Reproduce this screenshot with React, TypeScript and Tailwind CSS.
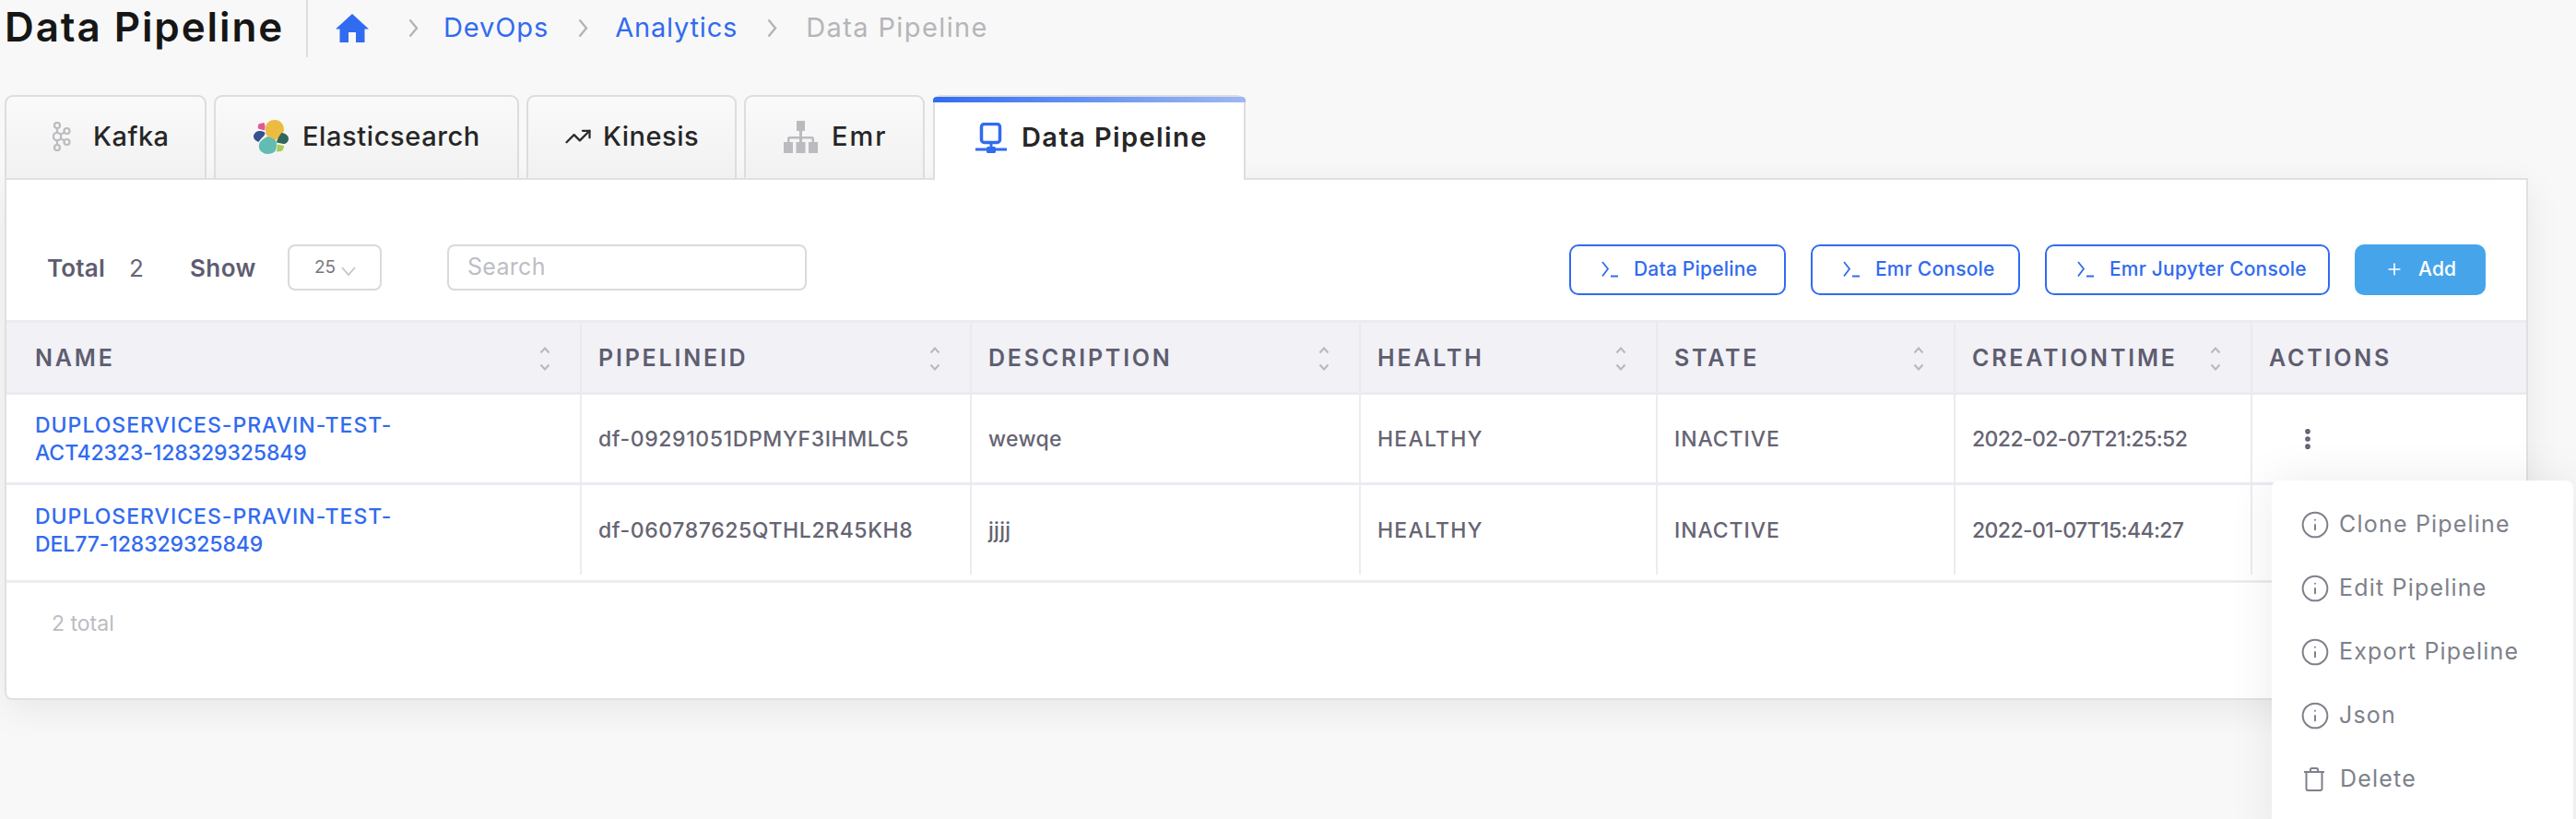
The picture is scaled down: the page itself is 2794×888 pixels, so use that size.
import { EllipsisVertical, Info, Plus, TrendingUp } from "lucide-react";

const HomeIcon = () => (
  <svg width="36" height="31" viewBox="0 0 36 31" fill="#316bf0">
    <path d="M18 0L36 16.500H31.500V31H22V20H14V31H4.500V16.500H0z" />
  </svg>
);

const KafkaIcon = () => (
  <svg width="20" height="32" viewBox="0 0 20 32" fill="none" stroke="#bcbcc0" strokeWidth="2.200">
    <circle cx="5" cy="4" r="3" />
    <circle cx="5" cy="16" r="4.200" />
    <circle cx="5" cy="28" r="3" />
    <circle cx="15.500" cy="10" r="3" />
    <circle cx="15.500" cy="22" r="3" />
    <path d="M5 7v5M5 20v5M8.500 14l4.500-2.500M8.500 18l4.500 2.500" />
  </svg>
);

const ElasticIcon = () => (
  <svg width="38" height="37" viewBox="0 0 38 37">
    <path d="M13 9c0-5 4-9 10-9 6 0 10 5 10 10 0 3-2 6-4 8l-6 4.500c-2-2-7-4-9-6-1-2-1-5-1-7.500z" fill="#ecbb42" />
    <path d="M5.500 4.500L11 3c1.500 1 2 5 1 8.500L5 9.500c-.5-2 0-4 .5-5z" fill="#e05a92" />
    <path d="M4 12.500c3-1 6-.5 8.500 1.500 0 2-1.500 4-3.500 5.500-1 1-2.500 3-3.500 4.500C3 23 0 21 0 18c0-2 2-5 4-5.500z" fill="#35518f" />
    <path d="M30.500 14c4 .5 7.500 3 7.500 6.500 0 3-3 6-5.500 5.500L25 24.500c0-2 3-8 5.500-10.500z" fill="#30665b" />
    <path d="M7 24c3-3 7-6 9-6 3 1 7 3 8.500 5 1 4 .5 8-1 11-2 2-5 3-9 3-4-.5-8-3-8.500-7-.5-2 0-4 1-6z" fill="#62bcb2" />
    <path d="M25.500 26.500l7.500 1.500c0 2-1 5-3 6l-5 .5c.5-2.500.5-5.500.5-8z" fill="#a8cc55" />
  </svg>
);

const EmrIcon = () => (
  <svg width="37" height="35" viewBox="0 0 37 35" fill="#bbbbbf">
    <rect x="14" y="0" width="9" height="11" />
    <rect x="17" y="11" width="3" height="6" />
    <path d="M4 24v-5c0-1 1-2 2-2h25c1 0 2 1 2 2v5h-2.500v-4.500h-10.500v4.500h-3v-4.500h-10.500v4.500z" />
    <rect x="0" y="23" width="10" height="12" />
    <rect x="13.500" y="23" width="10" height="12" />
    <rect x="27" y="23" width="10" height="12" />
  </svg>
);

const PipelineIcon = () => (
  <svg width="34" height="33" viewBox="0 0 34 33" fill="none" stroke="#316bf0">
    <rect x="6.500" y="1.500" width="20" height="20" rx="3" strokeWidth="3.500" />
    <path d="M17 23v5M0 29h34" strokeWidth="3" />
    <rect x="12" y="26" width="10" height="7" rx="1.500" fill="#316bf0" stroke="none" />
  </svg>
);

const TermIcon = () => (
  <svg width="20" height="18" viewBox="0 0 20 18" fill="none" stroke="#316bf0" strokeWidth="1.800">
    <path d="M2 1l6 7.500-6 8M11 16.500h8" />
  </svg>
);

const SortIcon = () => (
  <svg width="12" height="26" viewBox="0 0 12 26" fill="none" stroke="#b7b7c3" strokeWidth="2">
    <path d="M1.500 6.500L6 1.500l4.500 5M1.500 19.500l4.500 5 4.500-5" />
  </svg>
);

const TrashIcon = () => (
  <svg width="24" height="26" viewBox="0 0 24 26" fill="none" stroke="#7d818b" strokeWidth="2">
    <path d="M1 5h22M8 5V2.500C8 1.500 8.500 1 9.500 1h5c1 0 1.500.5 1.500 1.500V5M3.500 5v18c0 1 1 2 2 2h13c1 0 2-1 2-2V5" />
  </svg>
);

const Crumb = () => (
  <svg width="11" height="21" viewBox="0 0 11 21" fill="none" stroke="#b4b4b8" strokeWidth="2.400">
    <path d="M1.500 1.500l7.500 9-7.500 9" />
  </svg>
);

const tabs = [
  { label: "Kafka", icon: <KafkaIcon />, w: "w-[219px] pl-[50px] gap-[24px] tracking-[0.5px]" },
  { label: "Elasticsearch", icon: <ElasticIcon />, w: "w-[331px] pl-[41px] gap-[15px] tracking-[0.6px]" },
  { label: "Kinesis", icon: <TrendingUp size={30} color="#2b2b2b" strokeWidth={1.800} />, w: "w-[228px] pl-[39px] gap-[12px] tracking-[0.5px]" },
  { label: "Emr", icon: <EmrIcon />, w: "w-[196px] pl-[41px] gap-[15px] tracking-[2px]" },
];

const columns = [
  { label: "NAME", sort: true },
  { label: "PIPELINEID", sort: true },
  { label: "DESCRIPTION", sort: true },
  { label: "HEALTH", sort: true },
  { label: "STATE", sort: true },
  { label: "CREATIONTIME", sort: true },
  { label: "ACTIONS", sort: false },
];

const rows = [
  {
    name: ["DUPLOSERVICES-PRAVIN-TEST-", "ACT42323-128329325849"],
    id: "df-09291051DPMYF3IHMLC5",
    description: "wewqe",
    time: "2022-02-07T21:25:52",
    height: "h-[98px] border-b-[3px] border-[#ebebf1]",
  },
  {
    name: ["DUPLOSERVICES-PRAVIN-TEST-", "DEL77-128329325849"],
    id: "df-060787625QTHL2R45KH8",
    description: "jjjj",
    time: "2022-01-07T15:44:27",
    height: "h-[97px]",
  },
];

const gridCols = "grid grid-cols-[624px_423px_422px_322px_323px_322px_1fr]";

const menuItems = ["Clone Pipeline", "Edit Pipeline", "Export Pipeline", "Json"];

export default function App() {
  return (
    <div className="relative h-[888px] w-[2794px] overflow-hidden bg-[#f8f8f8] pl-[5px] font-['Inter',sans-serif]">
      {/* Header */}
      <div className="flex h-[103px] items-start">
        <div className="flex h-[62px] w-[329px] items-center border-r-2 border-[#dedede] pb-[4px]">
          <h1 className="text-[44px] font-semibold tracking-[1.9px] text-[#161616]">Data Pipeline</h1>
        </div>
        <div className="flex h-[60px] items-center text-[29px] tracking-[0.7px]">
          <div className="ml-[30px]"><HomeIcon /></div>
          <div className="ml-[43px]"><Crumb /></div>
          <span className="ml-[27px] tracking-[0.9px] text-[#316bf0]">DevOps</span>
          <div className="ml-[32px]"><Crumb /></div>
          <span className="ml-[29px] tracking-[0.8px] text-[#316bf0]">Analytics</span>
          <div className="ml-[32px]"><Crumb /></div>
          <span className="ml-[31px] tracking-[1.4px] text-[#b5b5b9]">Data Pipeline</span>
        </div>
      </div>

      {/* Tabs */}
      <div className="flex h-[90px] gap-[8px]">
        {tabs.map((tab) => (
          <div
            key={tab.label}
            className={`flex items-center rounded-t-[9px] border-2 border-b-0 border-[#dddddd] bg-linear-to-b from-[#fafafa] to-[#f1f1f1] pb-[2px] text-[29px] font-medium text-[#262626] ${tab.w}`}
          >
            {tab.icon}
            <span>{tab.label}</span>
          </div>
        ))}
        <div className="relative z-10 ml-[1px] flex h-[92px] w-[339px] flex-col rounded-t-[9px] border-x-2 border-t-2 border-[#dddddd] bg-white">
          <div className="-mx-[2px] h-[6px] rounded-t-[4px] bg-linear-to-r from-[#316bf0] to-[#9db8f2]" />
          <div className="flex flex-1 items-center gap-[16px] pb-[8px] pl-[44px] text-[29px] font-semibold tracking-[1.4px] text-[#262626]">
            <PipelineIcon />
            <span>Data Pipeline</span>
          </div>
        </div>
      </div>

      {/* Panel */}
      <div className="h-[566px] w-[2737px] rounded-b-[8px] border-2 border-[#e0e0e0] bg-white shadow-[0_10px_40px_rgba(0,0,0,0.07)]">
        <div className="flex h-[152px] items-start justify-between pl-[44px] pr-[44px] pt-[70px]">
          <div className="flex h-[50px] items-center">
            <span className="w-[89px] text-[26px] font-semibold tracking-[0.2px] text-[#5e5d70]">Total</span>
            <span className="w-[66px] text-[26px] text-[#66657a]">2</span>
            <span className="w-[106px] text-[26px] font-semibold tracking-[0.4px] text-[#5e5d70]">Show</span>
            <div className="flex h-[50px] w-[102px] items-center rounded-[8px] border-2 border-[#d9d9df] pl-[27px] text-[19px] text-[#77777f]">
              25
              <svg width="16" height="10" viewBox="0 0 16 10" fill="none" stroke="#c4c4cc" strokeWidth="1.800" className="ml-[6px] mt-[8px]">
                <path d="M1 1l7 8 7-8" />
              </svg>
            </div>
            <div className="ml-[71px] flex h-[50px] w-[390px] items-center rounded-[8px] border-2 border-[#d9d9df] pl-[20px] text-[25px] tracking-[0.3px] text-[#bdbdc6]">
              Search
            </div>
          </div>
          <div className="flex items-center gap-[27px] text-[21px] font-medium tracking-[0.2px] text-[#316bf0]">
            <button className="flex h-[55px] w-[235px] items-center gap-[16px] rounded-[10px] border-2 border-[#316bf0] pb-[2px] pl-[32px]">
              <TermIcon />
              Data Pipeline
            </button>
            <button className="flex h-[55px] w-[227px] items-center gap-[16px] rounded-[10px] border-2 border-[#316bf0] pb-[2px] pl-[32px]">
              <TermIcon />
              Emr Console
            </button>
            <button className="flex h-[55px] w-[309px] items-center gap-[16px] rounded-[10px] border-2 border-[#316bf0] pb-[2px] pl-[32px]">
              <TermIcon />
              Emr Jupyter Console
            </button>
            <button className="flex h-[55px] w-[142px] items-center gap-[16px] rounded-[10px] bg-[#46a5ea] pb-[2px] pl-[33px] text-white">
              <Plus size={20} strokeWidth={2} />
              Add
            </button>
          </div>
        </div>

        {/* Table */}
        <div className={`${gridCols} h-[81px] border-y-[3px] border-[#ebebf1] bg-[#f1f1f6]`}>
          {columns.map((col, i) => (
            <div
              key={col.label}
              className={`flex items-center justify-between pr-[32px] pt-[2px] text-[25px] font-semibold tracking-[2.8px] text-[#5e5d70] ${i === 0 ? "pl-[31px]" : "pl-[18px]"} ${i < 6 ? "border-r-2 border-[#e9e9ef]" : ""}`}
            >
              <span>{col.label}</span>
              {col.sort && <SortIcon />}
            </div>
          ))}
        </div>
        {rows.map((row, r) => (
          <div key={row.id} className={`${gridCols} ${row.height} text-[23px] font-medium text-[#666473]`}>
            <div className="flex flex-col justify-center border-r-2 border-[#ebebf1] pl-[31px] leading-[30px] text-[#316bf0]">
              <span className="tracking-[1px]">{row.name[0]}</span>
              <span className="tracking-[-0.1px]">{row.name[1]}</span>
            </div>
            <div className="flex items-center border-r-2 border-[#ebebf1] pl-[18px] pt-[2px] tracking-[0.6px]">{row.id}</div>
            <div className="flex items-center border-r-2 border-[#ebebf1] pl-[18px] pt-[2px] tracking-[0.3px]">{row.description}</div>
            <div className="flex items-center border-r-2 border-[#ebebf1] pl-[18px] pt-[2px] tracking-[1.2px]">HEALTHY</div>
            <div className="flex items-center border-r-2 border-[#ebebf1] pl-[18px] pt-[2px] tracking-[0.9px]">INACTIVE</div>
            <div className="flex items-center border-r-2 border-[#ebebf1] pl-[18px] pt-[2px] tracking-[-0.6px]">{row.time}</div>
            <div className="flex items-center pl-[46px]">
              {r === 0 && <EllipsisVertical size={28} color="#5e5d70" strokeWidth={2.800} />}
            </div>
          </div>
        ))}
        <div className="mt-[6px] flex h-[92px] items-center border-t-[3px] border-[#ebebf1] pl-[49px] text-[23px] text-[#bcbcc2]">
          2 total
        </div>
      </div>

      {/* Actions menu */}
      <div className="absolute left-[2464px] top-[521px] flex h-[400px] w-[327px] flex-col rounded-[8px] bg-white pl-[31px] pt-[13px] text-[25px] tracking-[1.2px] text-[#7d818b] shadow-[0_0_50px_rgba(0,0,0,0.08)]">
        {menuItems.map((item) => (
          <div key={item} className="flex h-[69px] items-center gap-[10px]">
            <Info size={32} strokeWidth={1.500} />
            <span>{item}</span>
          </div>
        ))}
        <div className="flex h-[69px] items-center gap-[16px] pl-[3px]">
          <TrashIcon />
          <span>Delete</span>
        </div>
      </div>
    </div>
  );
}
